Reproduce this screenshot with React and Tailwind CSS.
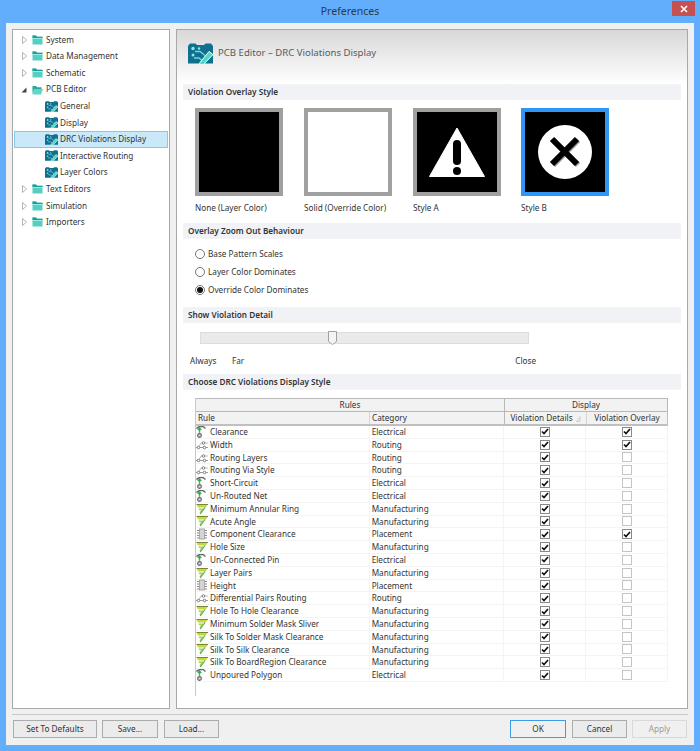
const font = { fontFamily: '"Noto Sans", "Open Sans", sans-serif' };

function Folder({ open }) {
  return (
    <svg width="11" height="10" viewBox="0 0 11 10" className="shrink-0 mr-[3px]">
      {open ? (
        <>
          <path d="M0.5 1h3.5l1 1.2h4.5v1.8H2.5L0.5 9z" fill="#2aa6a0" />
          <path d="M2.5 4H11L9 9.5H0.5z" fill="#62d6c8" />
        </>
      ) : (
        <>
          <path d="M0.5 0.5h3.5l1 1.2H10.5V9.5H0.5z" fill="#56cfc2" />
          <path d="M0.5 0.5h3.5l1 1.2H10.5V3H0.5z" fill="#1f9d98" />
          <path d="M0.5 3h10v1H0.5z" fill="#9ceade" />
        </>
      )}
    </svg>
  );
}

function Pcb({ w = 13, h = 11 }) {
  return (
    <svg width={w} height={h} viewBox="0 0 25 21" className="shrink-0">
      <path d="M0 3L2 0.5H7.5L9 2H16L17.5 0.5H23L25 3V20.5H0z" fill="#116f90" />
      <circle cx="5" cy="5.5" r="1.7" fill="#8fe6e6" />
      <circle cx="11" cy="5.5" r="1.2" fill="#8fe6e6" />
      <circle cx="5" cy="12" r="1.5" fill="#8fe6e6" />
      <path d="M7 8.5H12L17 12.5" stroke="#6fd6da" strokeWidth="1.3" fill="none" />
      <path d="M6 15H11L14 17.5" stroke="#6fd6da" strokeWidth="1.3" fill="none" />
      <path d="M12 19.5L21 8.5L25 11.5L15.5 21.5L11.5 21.5z" fill="#46dcc8" stroke="#ffffff" strokeWidth="1" />
    </svg>
  );
}

function TreeRow({ label, level = 0, arrow, selected, open }) {
  const pcb = level === 1;
  return (
    <div
      className={
        "flex items-center h-[16.6px] border " +
        (selected ? "bg-[#c9e8f8] border-[#84c8ec]" : "border-transparent")
      }
    >
      {pcb ? (
        <div className="w-[30px] shrink-0" />
      ) : (
        <div className="w-[17px] shrink-0 flex justify-center pl-[1px]">
          {arrow === "open" ? (
            <svg width="6" height="6" viewBox="0 0 6 6"><path d="M5.5 0.5V5.5H0.5z" fill="#444" /></svg>
          ) : (
            <svg width="5" height="8" viewBox="0 0 5 8"><path d="M0.5 0.5L4.5 4L0.5 7.5z" fill="#fff" stroke="#b4b4b4" /></svg>
          )}
        </div>
      )}
      {pcb ? <Pcb /> : <Folder open={open} />}
      <span className={"text-[8.2px] text-[#333] whitespace-nowrap " + (pcb ? "ml-[2px]" : "ml-0")}>{label}</span>
    </div>
  );
}

function Section({ children }) {
  return (
    <div className="h-[16px] bg-[#f0f2f6] border-b border-[#f4f4f4] flex items-center pl-[5px] pt-[1px] text-[8.2px] font-semibold text-[#333]">
      {children}
    </div>
  );
}

function Tile({ label, bg = "bg-black", selected, children, ml = "" }) {
  return (
    <div className={"flex flex-col w-[88px] " + ml}>
      <div
        className={
          "h-[88px] w-[88px] border-4 flex items-center justify-center " +
          bg +
          (selected ? " border-[#2f96f5]" : " border-[#a0a0a0]")
        }
      >
        {children}
      </div>
      <div className="text-[8.2px] text-[#333] mt-[5px] leading-[13px] whitespace-nowrap">{label}</div>
    </div>
  );
}

function Radio({ label, checked }) {
  return (
    <div className="flex items-center h-[18px]">
      <div className="w-[10px] h-[10px] rounded-full border border-[#777] bg-white flex items-center justify-center shrink-0">
        {checked && <div className="w-[6px] h-[6px] rounded-full bg-[#111]" />}
      </div>
      <span className="ml-[3px] text-[8.2px] text-[#333]">{label}</span>
    </div>
  );
}

function Check({ on }) {
  return (
    <div className={"w-[10px] h-[10px] border bg-white flex items-center justify-center " + (on ? "border-[#888]" : "border-[#c4c4c4]")}>
      {on ? (
        <svg width="8" height="7" viewBox="0 0 8 7">
          <path d="M1 3.5L3 5.5L7 1" stroke="#111" strokeWidth="1.7" fill="none" />
        </svg>
      ) : null}
    </div>
  );
}

function RuleIcon({ type }) {
  if (type === "E")
    return (
      <svg width="12" height="12" viewBox="0 0 12 12" className="shrink-0">
        <path d="M0.5 2.5Q2 0.5 5 0.5H7L9.5 2.5" stroke="#666" strokeWidth="1.4" fill="none" />
        <path d="M3.5 6V3M1.8 4L3.5 2L5.2 4" stroke="#2fae4a" strokeWidth="1.3" fill="none" />
        <path d="M3.5 5.5v2" stroke="#999" strokeWidth="1.4" />
        <circle cx="3.5" cy="9.5" r="1.9" fill="#ccc" stroke="#666" strokeWidth="1.1" />
      </svg>
    );
  if (type === "R")
    return (
      <svg width="12" height="12" viewBox="0 0 12 12" className="shrink-0">
        <path d="M0 8.5H12" stroke="#888" strokeWidth="0.8" fill="none" />
        <path d="M5 4H12M5 4L2.5 8.5" stroke="#aaa" strokeWidth="0.8" fill="none" />
        <circle cx="7.5" cy="4" r="1.3" fill="#fff" stroke="#666" strokeWidth="0.8" />
        <circle cx="2.5" cy="8.5" r="1.3" fill="#fff" stroke="#666" strokeWidth="0.8" />
        <circle cx="8.5" cy="8.5" r="1.3" fill="#fff" stroke="#666" strokeWidth="0.8" />
      </svg>
    );
  if (type === "M")
    return (
      <svg width="12" height="12" viewBox="0 0 12 12" className="shrink-0">
        <path d="M0.5 1.5H12L9.5 4.5H2z" fill="#c8d83a" />
        <path d="M0.5 1.5H12" stroke="#6c7a30" strokeWidth="0.9" />
        <path d="M2.5 5.5H7.5L4.5 10.5L3.5 9.5L5 7H3z" fill="#a8d048" />
        <path d="M9 4.5L4.2 11" stroke="#4caf50" strokeWidth="1.2" />
      </svg>
    );
  return (
    <svg width="12" height="12" viewBox="0 0 12 12" className="shrink-0">
      <rect x="3.5" y="1" width="5" height="10" fill="#d4d4d4" stroke="#999" strokeWidth="0.8" />
      <path d="M1 2.5H3M1 5H3M1 7.5H3M1 10H3M9 2.5H11M9 5H11M9 7.5H11M9 10H11" stroke="#888" strokeWidth="1" />
    </svg>
  );
}

const catIcon = { Electrical: "E", Routing: "R", Manufacturing: "M", Placement: "P" };

const rules = [
  ["Clearance", "Electrical", true, true],
  ["Width", "Routing", true, true],
  ["Routing Layers", "Routing", true, false],
  ["Routing Via Style", "Routing", true, false],
  ["Short-Circuit", "Electrical", true, false],
  ["Un-Routed Net", "Electrical", true, false],
  ["Minimum Annular Ring", "Manufacturing", true, false],
  ["Acute Angle", "Manufacturing", true, false],
  ["Component Clearance", "Placement", true, true],
  ["Hole Size", "Manufacturing", true, false],
  ["Un-Connected Pin", "Electrical", true, false],
  ["Layer Pairs", "Manufacturing", true, false],
  ["Height", "Placement", true, false],
  ["Differential Pairs Routing", "Routing", true, false],
  ["Hole To Hole Clearance", "Manufacturing", true, false],
  ["Minimum Solder Mask Sliver", "Manufacturing", true, false],
  ["Silk To Solder Mask Clearance", "Manufacturing", true, false],
  ["Silk To Silk Clearance", "Manufacturing", true, false],
  ["Silk To BoardRegion Clearance", "Manufacturing", true, false],
  ["Unpoured Polygon", "Electrical", true, false],
];

function Btn({ label, w, primary, disabled, className = "" }) {
  return (
    <div
      className={
        "h-[18px] flex items-center justify-center text-[8.2px] border " +
        w +
        " " +
        className +
        (primary
          ? " border-[#3f9ae8] bg-[#f0f0f0] text-[#333]"
          : disabled
          ? " border-[#d9d9d9] bg-[#f0f0f0] text-[#9a9a9a]"
          : " border-[#acacac] bg-[#ebebeb] text-[#333]")
      }
    >
      {label}
    </div>
  );
}

export default function App() {
  return (
    <div className="w-[700px] h-[751px] bg-[#62aefd] flex flex-col overflow-hidden" style={font}>
      <div className="h-[23px] shrink-0 relative flex items-center justify-center text-[10.5px] text-[#2b3a4a]">
        Preferences
        <div className="absolute right-[5px] top-[1px] w-[23px] h-[15px] bg-[#c75050] flex items-center justify-center">
          <svg width="8" height="8" viewBox="0 0 8 8"><path d="M1 1L7 7M7 1L1 7" stroke="#fff" strokeWidth="1.6" /></svg>
        </div>
      </div>
      <div className="mx-[6px] h-[722px] bg-[#f0f0f0] p-[6px] flex flex-col">
        <div className="flex gap-[6px] h-[680px]">
          <div className="w-[158px] bg-white border border-[#a8a8a8] pt-[1.5px] pl-[1px] pr-[1px]">
            <TreeRow label="System" />
            <TreeRow label="Data Management" />
            <TreeRow label="Schematic" />
            <TreeRow label="PCB Editor" arrow="open" open />
            <TreeRow label="General" level={1} />
            <TreeRow label="Display" level={1} />
            <TreeRow label="DRC Violations Display" level={1} selected />
            <TreeRow label="Interactive Routing" level={1} />
            <TreeRow label="Layer Colors" level={1} />
            <TreeRow label="Text Editors" />
            <TreeRow label="Simulation" />
            <TreeRow label="Importers" />
          </div>
          <div className="w-[512px] bg-white border border-[#a8a8a8] flex flex-col">
            <div className="h-[54px] shrink-0 bg-gradient-to-b from-[#d8d8d8] to-white flex items-start pl-[11px] pt-[13px]">
              <Pcb w={25} h={21} />
              <span className="ml-[5px] text-[9.6px] leading-[20px] text-[#5a5a5a] whitespace-nowrap">PCB Editor – DRC Violations Display</span>
            </div>
            <div className="px-[6px]">
              <Section>Violation Overlay Style</Section>
              <div className="flex pl-[12px] pt-[8px] h-[123px]">
                <Tile label="None (Layer Color)" />
                <Tile label="Solid (Override Color)" bg="bg-white" ml="ml-[21px]" />
                <Tile label="Style A" ml="ml-[21px]">
                  <svg width="58" height="52" viewBox="0 0 58 52">
                    <path d="M29 2L56.5 50.5H1.5z" fill="#fff" stroke="#fff" strokeLinejoin="round" />
                    <rect x="25" y="14" width="8" height="25" rx="4" fill="#000" />
                    <circle cx="29" cy="45" r="4" fill="#000" />
                  </svg>
                </Tile>
                <Tile label="Style B" selected ml="ml-[20px]">
                  <svg width="56" height="56" viewBox="0 0 56 56">
                    <circle cx="28" cy="28" r="27" fill="#fff" />
                    <path d="M16 16L41 41M41 16L16 41" stroke="#999" strokeWidth="6" />
                    <path d="M15 15L40 40M40 15L15 40" stroke="#000" strokeWidth="6" />
                  </svg>
                </Tile>
              </div>
              <Section>Overlay Zoom Out Behaviour</Section>
              <div className="pl-[12px] pt-[6px] h-[68px]">
                <Radio label="Base Pattern Scales" />
                <Radio label="Layer Color Dominates" />
                <Radio label="Override Color Dominates" checked />
              </div>
              <Section>Show Violation Detail</Section>
              <div className="h-[51px] pt-[9px]">
                <div className="relative ml-[17px] w-[329px] h-[12px] bg-[#e8ebe8] border border-[#dcdcdc]">
                  <svg width="9" height="14" viewBox="0 0 9 14" className="absolute left-[127px] top-[-2px]">
                    <path d="M0.5 0.5H8.5V10.5L4.5 13.5L0.5 10.5z" fill="#f4f4f4" stroke="#a0a0a0" />
                  </svg>
                </div>
                <div className="flex text-[8.2px] text-[#333] mt-[10px] leading-[13px] pl-[7px] w-[353px]">
                  <span className="w-[42px]">Always</span>
                  <span>Far</span>
                  <span className="ml-auto">Close</span>
                </div>
              </div>
              <Section>Choose DRC Violations Display Style</Section>
              <div className="ml-[12px] mt-[8px] w-[473px] border-l border-[#c8c8c8] h-[298px]">
                <div className="flex h-[14px] bg-[#f2f2f2] border-t border-b border-r border-[#b8b8b8] text-[8.2px] text-[#333]">
                  <div className="w-[309px] flex items-center justify-center border-r border-[#b8b8b8] pt-[1px]">Rules</div>
                  <div className="flex-1 flex items-center justify-center pt-[1px]">Display</div>
                </div>
                <div className="flex h-[14px] bg-[#f2f2f2] border-b-2 border-r border-[#c0c0c0] text-[8.2px] text-[#333]">
                  <div className="w-[174px] pl-[2px] flex items-center border-r border-[#d4d4d4] pt-[1px]">Rule</div>
                  <div className="w-[135px] pl-[2px] flex items-center border-r border-[#b8b8b8] pt-[1px]">Category</div>
                  <div className="w-[82px] flex items-center justify-center border-r border-[#d4d4d4] whitespace-nowrap pt-[1px]">
                    Violation Details
                    <svg width="5" height="6" viewBox="0 0 5 6" className="ml-[3px]"><path d="M0.5 5.5L4 0.5V5.5z" fill="none" stroke="#c4c4c4" strokeWidth="0.8" /></svg>
                  </div>
                  <div className="flex-1 flex items-center justify-center whitespace-nowrap pt-[1px]">Violation Overlay</div>
                </div>
                {rules.map(([name, cat, a, b]) => (
                  <div key={name} className="flex h-[12.8px] border-b border-[#f4f4f4] text-[8.2px] text-[#333] leading-none">
                    <div className="w-[174px] flex items-center border-r border-[#f4f4f4] whitespace-nowrap">
                      <RuleIcon type={catIcon[cat]} />
                      <span className="ml-[2px] pt-[0.6px]">{name}</span>
                    </div>
                    <div className="w-[135px] pl-[2px] pt-[0.6px] flex items-center border-r border-[#f4f4f4]">{cat}</div>
                    <div className="w-[82px] flex items-center justify-center border-r border-[#f4f4f4]">
                      <Check on={a} />
                    </div>
                    <div className="w-[82px] flex items-center justify-center border-r border-[#f4f4f4]">
                      <Check on={b} />
                    </div>
                  </div>
                ))}
              </div>
            </div>
          </div>
        </div>
        <div className="mt-[5px] h-[1px] bg-[#c8c8c8]" />
        <div className="flex mt-[5px] pl-[1px] pr-[1px]">
          <Btn label="Set To Defaults" w="w-[84px]" />
          <Btn label="Save..." w="w-[56px]" className="ml-[5px]" />
          <Btn label="Load..." w="w-[55px]" className="ml-[6px]" />
          <Btn label="OK" w="w-[56px]" primary className="ml-auto" />
          <Btn label="Cancel" w="w-[55px]" className="ml-[6px]" />
          <Btn label="Apply" w="w-[55px]" disabled className="ml-[5px]" />
        </div>
      </div>
    </div>
  );
}
